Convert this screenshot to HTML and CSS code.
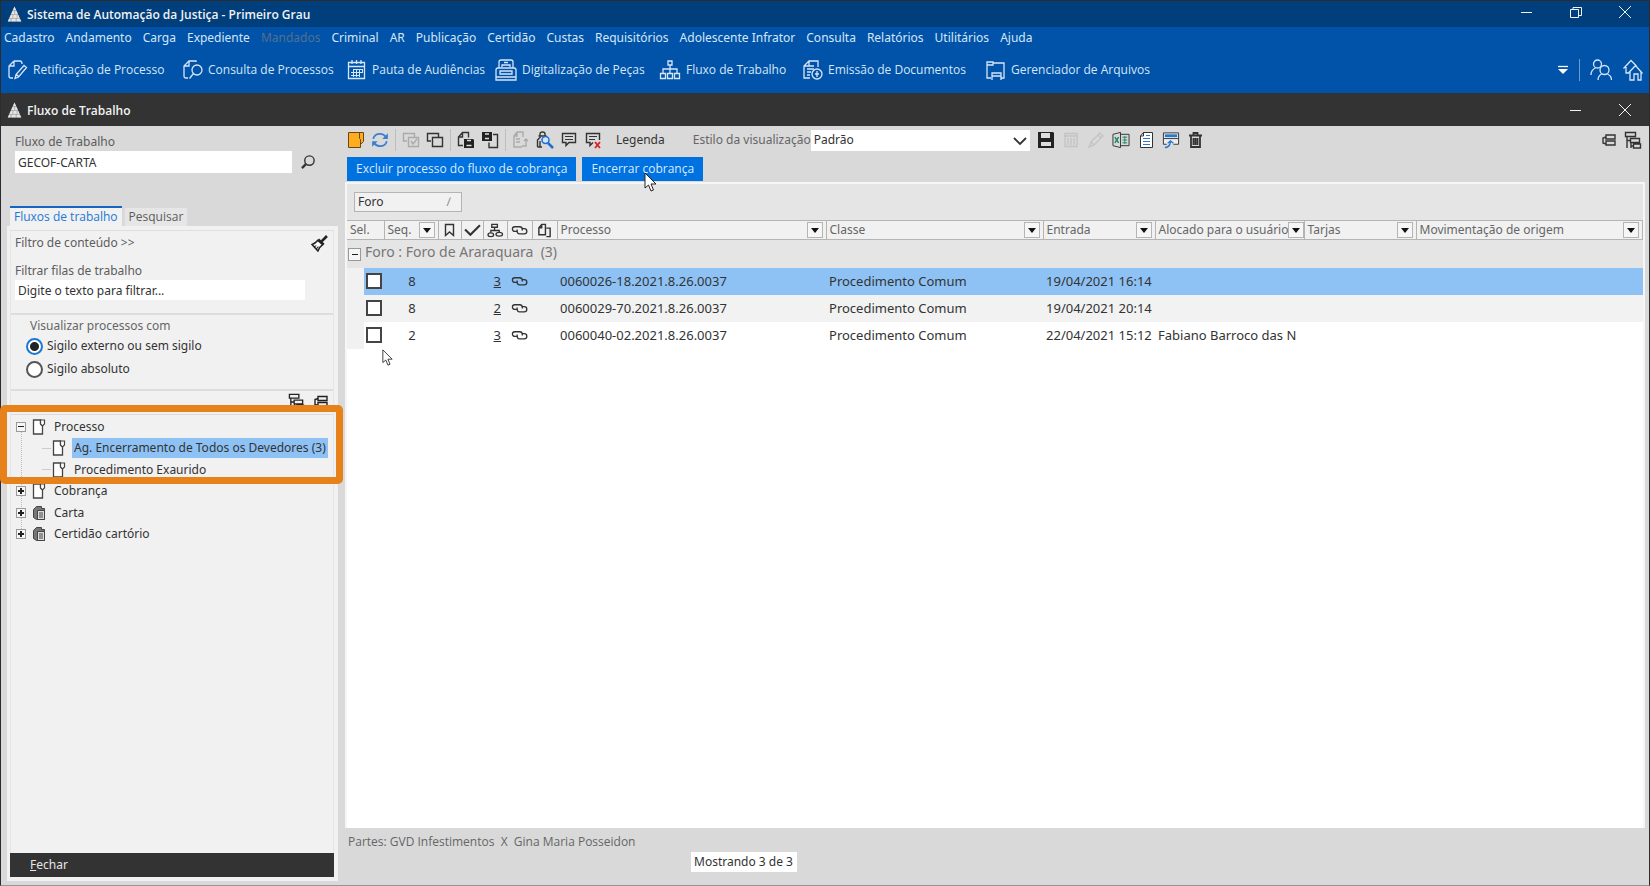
FILE: index.html
```html
<!DOCTYPE html>
<html lang="pt-BR">
<head>
<meta charset="utf-8">
<title>Sistema de Automação da Justiça - Primeiro Grau</title>
<link rel="stylesheet" href="styles.css">
</head>
<body>
<svg class="defs" aria-hidden="true">
  <symbol id="logo" viewBox="0 0 16 16"><path fill="#8a8a8a" d="M8 0 .8 16H15.200Z"/><path fill="#e4e4e4" d="M8 0 6.300 3.600 9.700 3.600ZM6 4.200 4.300 8.200H8V4.200ZM8.600 4.200V8.200h3.100L10 4.200ZM4 8.800 2.500 12.200H6V8.800ZM6.600 8.800v3.400h3.800V8.800ZM11 8.800v3.400h2.500L12 8.800ZM2.200 12.800 .8 16H4V12.800ZM4.600 12.800v3.200h4.800V12.800ZM10 12.800v3.200h5.200l-1.400-3.200Z"/></symbol>
  <symbol id="min" viewBox="0 0 14 14"><path d="M1 7.500H12"/></symbol>
  <symbol id="restore" viewBox="0 0 14 14"><path d="M1.500 4.500h8v8h-8ZM4 4V2.500h8.500v8H10"/></symbol>
  <symbol id="close" viewBox="0 0 14 14"><path d="M1 1 13 13M13 1 1 13"/></symbol>
  <symbol id="edit" viewBox="0 0 20 20"><path d="M6 1h6q2 0 2 3M6 1 1 6v10q0 2 2 2h2M6 1v5H1M7 18.500l1-4 8-9 2.500 2-8 9.500ZM8 14l2.500 2.500"/></symbol>
  <symbol id="lookup" viewBox="0 0 20 20"><path d="M5 18H3q-2 0-2-2V6l5-5h7v1M6 1v5H1"/><circle cx="14" cy="10" r="5"/><path d="m10.500 13.500-4 5"/></symbol>
  <symbol id="calendar" viewBox="0 0 20 20"><path d="M1.500 2.500h16v16h-16ZM1.500 6.500h16M5 0v4M9.500 0v4M14 0v4"/><path stroke-width="1" d="M7 9.500h9M4 12.500h12M4 15.500h9M6.500 9v8M9.500 9v8M12.500 9v8M15.500 9v4"/></symbol>
  <symbol id="scanner" viewBox="0 0 22 22"><path d="M4 9V3q0-2 2-2h10q2 0 2 2v6M7 8V6h8v2M1 11q0-2 2-2h16q2 0 2 2v10H1ZM5 12h12v3H5ZM1 18h20M9 3.500h4"/></symbol>
  <symbol id="flow" viewBox="0 0 22 20"><path d="M9 1h4v4H9ZM11 5v8M4 13V9h14v4M1.500 13.500h5v5h-5ZM8.500 13.500h5v5h-5ZM15.500 13.500h5v5h-5Z"/></symbol>
  <symbol id="emit" viewBox="0 0 20 20"><path d="M7 18H1V6l5-5h9v6M6 1v5H1M6 6h5M4 9h7M4 12h4M4 15h3"/><circle cx="14" cy="14" r="5"/><path d="M14 11v6M12 14h4"/></symbol>
  <symbol id="files" viewBox="0 0 20 20"><path d="M5 18H1V2h6v3H1M7 3h11v15h-3M6 20v-7h9v7M6 16h9"/></symbol>
  <symbol id="more" viewBox="0 0 12 12"><path d="M1 2.500h10"/><path fill="currentColor" stroke="none" d="M1 5h10l-5 5Z"/></symbol>
  <symbol id="users" viewBox="0 0 22 22"><circle cx="7.500" cy="5" r="4"/><circle cx="14.500" cy="11" r="4.500"/><path d="M1 16q0-5 4.500-7M8 21q0-4 3.500-6M17.500 15q4 2 4 6"/></symbol>
  <symbol id="homes" viewBox="0 0 20 22"><path d="M.5 9.500 8 1.500l5.500 5.500M3 8v6h2M5 14.500l7.500-8 7 8M7 13v8h4v-6h4v6h3v-8"/></symbol>
  <symbol id="search" viewBox="0 0 16 16"><circle cx="9" cy="6.500" r="5" stroke-width="1.500"/><path stroke-width="2.500" d="M5.500 10 1 14.500"/></symbol>
  <symbol id="brush" viewBox="0 0 16 16"><path stroke-width="2.500" d="m15 1-5 5"/><path stroke-width="2" d="m7 4 5 5"/><path fill="#fff" stroke-width="1.500" d="M6.500 5Q4 8 1 9l5.500 6Q8 11 11 9Z"/><path d="m3 11 2-1M5 13l2-2"/></symbol>
  <symbol id="tree" viewBox="0 0 18 18"><path stroke-width="1.400" d="M1.500 1.500h10v4h-10ZM6.500 7.500h9v4h-9ZM9.500 13h7v4h-7ZM3 6v11M3 9.500h3M7 12v5M7 15h3"/></symbol>
  <symbol id="stack" viewBox="0 0 14 14"><path stroke-width="1.400" d="M4 2h9v4H4ZM4 8h9v4H4ZM4 4 1 5v5l3 1"/></symbol>
  <symbol id="folder" viewBox="0 0 18 18"><path fill="#ffad1c" stroke="#684719" d="M1.500 1.500h12v15h-12Z"/><path fill="#ffad1c" stroke="#684719" d="M12.500 1.500h4v9l-3 3v-5l-1-1Z"/></symbol>
  <symbol id="refresh" viewBox="0 0 16 16"><path stroke="#3a80cf" stroke-width="1.600" d="M2 7q1-4.500 6-4.500 3 0 5 2.500M14 9q-1 4.500-6 4.500-3 0-5-2.500"/><path fill="#3a80cf" stroke="none" d="M15 2v5h-5ZM1 14V9h5Z"/></symbol>
  <symbol id="copies" viewBox="0 0 18 18"><path stroke-width="1.400" d="M5 10H1.500V2.500h11V6"/><path stroke-width="1.400" d="M6.500 6.500h10v9h-10Z"/></symbol>
  <symbol id="copycheck" viewBox="0 0 18 18"><path stroke-width="1.400" d="M5 10H1.500V2.500h11V6M6.500 6.500h10v9h-10ZM9 10l2 3 4-5"/></symbol>
  <symbol id="docsave" viewBox="0 0 18 18"><path stroke-width="1.400" d="M6 14.500H1.500V6l4-4.500h6v5M5.500 1.500V6h-4"/><path fill="#222" stroke="none" d="M7 8h9l1 1v8H7Z"/><path stroke="#ddd" stroke-width="1.500" d="M10 9.500h4M9.500 14.500h5"/></symbol>
  <symbol id="savedoc" viewBox="0 0 18 18"><path fill="#222" stroke="none" d="M1 1h10v9H1Z"/><path stroke="#ddd" stroke-width="1.500" d="M4 3h4M4 7.500h4"/><path stroke-width="1.400" d="M12 3.500h4.500v13H8v-5"/></symbol>
  <symbol id="docarrow" viewBox="0 0 16 18"><path stroke-width="1.400" d="M4 1h6v5M4 1 1 5v11h8M4 1v4H1M3 8h4M3 11h4M13 8v7h-4M11 10l2-2 2 2"/></symbol>
  <symbol id="person" viewBox="0 0 18 18"><path stroke-width="1.400" d="M4 5V3q0-2 2.500-2T9 3v2M2.500 5h8M1.500 16V9l3-3M1.500 16H6M4 16V10"/><circle cx="9.500" cy="9" r="3.500" stroke="#1d6fd0" stroke-width="1.500" fill="#cfe6ff"/><path stroke="#1d6fd0" stroke-width="2.500" d="m12 12 5 5"/></symbol>
  <symbol id="chat" viewBox="0 0 18 18"><path stroke-width="1.400" d="M2.500 2.500h13v9H9l-3 3v-3H2.500Z"/><path d="M5 5.500h8M5 8.500h8"/></symbol>
  <symbol id="chatx" viewBox="0 0 18 18"><path stroke-width="1.400" d="M9 11.500 6 14.500v-3H2.500v-9h13V9"/><path d="M5 5.500h8M5 8.500h6"/><path stroke="#d82020" stroke-width="1.800" d="m11 11 5 6M16 11l-5 6"/></symbol>
  <symbol id="save" viewBox="0 0 18 18"><path fill="#222" stroke="none" d="M1 1h15l1 1v15H1Z"/><path fill="#ddd" stroke="none" d="M4 2h9v5H4ZM4 11h10v4H4Z"/></symbol>
  <symbol id="trash" viewBox="0 0 18 18"><path stroke-width="1.800" d="M2 4.500h13M6.500 4V2h4v2M4 5v11h9V5M6.500 7v7M8.500 7v7M10.500 7v7"/></symbol>
  <symbol id="calc" viewBox="0 0 16 18"><path stroke-width="1.400" d="M2 2.500h12v13H2ZM1 5h14M5 7v7M8 7v7M11 7v7"/></symbol>
  <symbol id="pencil" viewBox="0 0 18 18"><path stroke-width="1.400" d="m2 16 2-5 9-9 3 3-9 9ZM4 11l3 3M11 4l3 3"/></symbol>
  <symbol id="excel" viewBox="0 0 19 18"><path d="M1 3 9 1v16l-8-2ZM9 3h9v12H9"/><path stroke="#1d8a5f" stroke-width="1.600" d="m3 6 4 6M7 6l-4 6"/><path stroke="#1d8a5f" d="M11 6h5M11 9h5M11 12h5M13.500 5v8"/></symbol>
  <symbol id="doc" viewBox="0 0 16 18"><path fill="#fff" d="M5.500 1.500h9v15h-12V5ZM5.500 1.500V5h-3"/><path stroke="#2878d0" d="M5 7.500h7M5 10.500h7M5 13.500h7M8 4.500h4"/></symbol>
  <symbol id="window" viewBox="0 0 19 18"><path fill="#eee" d="M5 13.500H1.500v-12h16v12H12M2 7.500h15"/><path fill="#2878d0" stroke="none" d="M3 3h13v3H3Z"/><path stroke="#2878d0" stroke-width="1.500" d="M3 17q5 0 6-6M6 12.500l3-2.500 3 2.500"/></symbol>
  <symbol id="bookmark" viewBox="0 0 16 15"><path stroke-width="1.400" d="M4 1.500h8v11L8 9l-4 3.500Z"/></symbol>
  <symbol id="check" viewBox="0 0 16 14"><path stroke-width="2" d="m1 6 5 5 9-9"/></symbol>
  <symbol id="nodes" viewBox="0 0 18 16"><path stroke-width="1.400" d="M5 1.500h6v3H5ZM8 5v3M4 10V8h9v2"/><ellipse stroke-width="1.400" cx="4" cy="12.500" rx="3" ry="2"/><ellipse stroke-width="1.400" cx="13" cy="12" rx="3.500" ry="2"/></symbol>
  <symbol id="link" viewBox="0 0 18 12"><path stroke-width="1.400" d="M7 7H4a2.500 2.500 0 0 1 0-5H9q3 0 3 3v1M11 4h3a2.700 2.700 0 0 1 0 5.500H9Q6.500 9.500 6.500 6.500V5"/></symbol>
  <symbol id="pages" viewBox="0 0 16 16"><path stroke-width="1.500" d="M5 1.500h4v11H2V5ZM5 1.500V5H2M10 5.500h4v9h-4"/></symbol>
  <symbol id="page" viewBox="0 0 13 16"><path fill="#fff" stroke-width="1.300" d="M1 1h7v4l2 2v8H1Z"/><path fill="#fff" stroke-width="1.200" d="M8 1h4v4l-2 2-2-2Z"/></symbol>
  <symbol id="pagestack" viewBox="0 0 14 16"><path fill="#777" d="M1.500 4.500 4.500 1.500h5v2h3v11h-8l-3-2Z"/><path fill="#ddd" d="M5.500 5.500h7v9h-7Z"/><path d="M7 8h4M7 10h4M7 12h4"/></symbol>
  <symbol id="chevron" viewBox="0 0 14 10"><path stroke-width="1.800" d="m1 2 6 6 6-6"/></symbol>
  <symbol id="pointer" viewBox="0 0 13 20"><path fill="#fff" stroke="#222" d="M1 1v15l3.500-3 2.500 6 2.500-1L7 12h5Z"/></symbol>
</svg>

<div class="app">
  <header class="titlebar">
    <svg class="logo"><use href="#logo"/></svg>
    <h1>Sistema de Automação da Justiça - Primeiro Grau</h1>
    <div class="wincontrols">
      <button aria-label="Minimizar"><svg><use href="#min"/></svg></button>
      <button aria-label="Restaurar"><svg><use href="#restore"/></svg></button>
      <button aria-label="Fechar janela"><svg><use href="#close"/></svg></button>
    </div>
  </header>
  <nav class="menu">
    <a href="#">Cadastro</a><a href="#">Andamento</a><a href="#">Carga</a><a href="#">Expediente</a><a href="#" class="off">Mandados</a><a href="#">Criminal</a><a href="#">AR</a><a href="#">Publicação</a><a href="#">Certidão</a><a href="#">Custas</a><a href="#">Requisitórios</a><a href="#">Adolescente Infrator</a><a href="#">Consulta</a><a href="#">Relatórios</a><a href="#">Utilitários</a><a href="#">Ajuda</a>
  </nav>
  <div class="shortcuts">
    <div class="shortcut-list">
      <button><svg><use href="#edit"/></svg>Retificação de Processo</button>
      <button><svg><use href="#lookup"/></svg>Consulta de Processos</button>
      <button><svg><use href="#calendar"/></svg>Pauta de Audiências</button>
      <button><svg class="large"><use href="#scanner"/></svg>Digitalização de Peças</button>
      <button><svg class="large"><use href="#flow"/></svg>Fluxo de Trabalho</button>
      <button><svg><use href="#emit"/></svg>Emissão de Documentos</button>
      <button><svg><use href="#files"/></svg>Gerenciador de Arquivos</button>
    </div>
    <div class="session">
      <button aria-label="Mais opções"><svg class="small"><use href="#more"/></svg></button>
      <i class="bar"></i>
      <button aria-label="Usuários"><svg class="large"><use href="#users"/></svg></button>
      <button aria-label="Início"><svg class="large"><use href="#homes"/></svg></button>
    </div>
  </div>

  <div class="subtitle">
    <svg class="logo"><use href="#logo"/></svg>
    <h2>Fluxo de Trabalho</h2>
    <div class="wincontrols">
      <button aria-label="Minimizar fluxo"><svg><use href="#min"/></svg></button>
      <button aria-label="Fechar fluxo"><svg><use href="#close"/></svg></button>
    </div>
  </div>

  <div class="body">
    <aside class="side">
      <div class="picker">
        <label for="fluxo">Fluxo de Trabalho</label>
        <div class="picker-row">
          <input id="fluxo" type="text" value="GECOF-CARTA">
          <button aria-label="Buscar"><svg><use href="#search"/></svg></button>
        </div>
      </div>
      <div class="tabs">
        <button class="tab active">Fluxos de trabalho</button>
        <button class="tab">Pesquisar</button>
      </div>
      <div class="panel">
        <div class="inner">
          <div class="filters">
            <div class="filter-head"><a href="#">Filtro de conteúdo &gt;&gt;</a><button aria-label="Limpar filtro"><svg><use href="#brush"/></svg></button></div>
            <label for="filas">Filtrar filas de trabalho</label>
            <input id="filas" type="text" value="Digite o texto para filtrar...">
          </div>
          <fieldset class="secrecy">
            <legend>Visualizar processos com</legend>
            <label><input type="radio" name="sigilo" checked>Sigilo externo ou sem sigilo</label>
            <label><input type="radio" name="sigilo">Sigilo absoluto</label>
          </fieldset>
          <div class="treetools">
            <button aria-label="Expandir filas"><svg class="wide"><use href="#tree"/></svg></button>
            <button aria-label="Recolher filas"><svg><use href="#stack"/></svg></button>
          </div>
          <ul class="tree">
            <li><button class="toggle" aria-label="Recolher Processo"><i></i></button><svg><use href="#page"/></svg><span>Processo</span></li>
            <li class="child"><svg><use href="#page"/></svg><span class="picked">Ag. Encerramento de Todos os Devedores (3)</span></li>
            <li class="child"><svg><use href="#page"/></svg><span>Procedimento Exaurido</span></li>
            <li><button class="toggle plus" aria-label="Expandir Cobrança"><i></i></button><svg><use href="#page"/></svg><span>Cobrança</span></li>
            <li><button class="toggle plus" aria-label="Expandir Carta"><i></i></button><svg><use href="#pagestack"/></svg><span>Carta</span></li>
            <li><button class="toggle plus" aria-label="Expandir Certidão"><i></i></button><svg><use href="#pagestack"/></svg><span>Certidão cartório</span></li>
          </ul>
        </div>
        <button class="closebtn"><u>F</u>echar</button>
      </div>
      <div class="highlight"></div>
    </aside>

    <main class="main">
      <div class="tools">
        <div class="group g1">
          <button aria-label="Abrir"><svg><use href="#folder"/></svg></button>
          <button aria-label="Atualizar"><svg><use href="#refresh"/></svg></button>
        </div>
        <div class="group">
          <button aria-label="Marcar todos" class="dim"><svg><use href="#copycheck"/></svg></button>
          <button aria-label="Desmarcar"><svg><use href="#copies"/></svg></button>
        </div>
        <div class="group">
          <button aria-label="Gravar documento"><svg><use href="#docsave"/></svg></button>
          <button aria-label="Gravar cópia"><svg><use href="#savedoc"/></svg></button>
        </div>
        <div class="group">
          <button aria-label="Mover" class="dim"><svg><use href="#docarrow"/></svg></button>
          <button aria-label="Consultar parte"><svg><use href="#person"/></svg></button>
          <button aria-label="Observação"><svg><use href="#chat"/></svg></button>
          <button aria-label="Excluir observação"><svg><use href="#chatx"/></svg></button>
        </div>
        <button class="legend">Legenda</button>
        <label for="estilo">Estilo da visualização</label>
        <div class="select"><select id="estilo"><option>Padrão</option></select><svg><use href="#chevron"/></svg></div>
        <div class="group g2">
          <button aria-label="Salvar"><svg><use href="#save"/></svg></button>
          <button aria-label="Descartar" class="faint"><svg><use href="#calc"/></svg></button>
          <button aria-label="Editar" class="faint"><svg><use href="#pencil"/></svg></button>
          <button aria-label="Excel"><svg><use href="#excel"/></svg></button>
          <button aria-label="Relatório"><svg><use href="#doc"/></svg></button>
          <button aria-label="Restaurar visualização"><svg><use href="#window"/></svg></button>
          <button aria-label="Excluir"><svg><use href="#trash"/></svg></button>
        </div>
        <div class="group g3">
          <button aria-label="Recolher"><svg class="small"><use href="#stack"/></svg></button>
          <button aria-label="Expandir"><svg><use href="#tree"/></svg></button>
        </div>
      </div>
      <div class="actions">
        <button>Excluir processo do fluxo de cobrança</button>
        <button>Encerrar cobrança</button>
        <svg class="cursor over"><use href="#pointer"/></svg>
      </div>
      <div class="grid">
        <div class="groupby"><button>Foro<span>∕</span></button></div>
        <table>
          <colgroup><col class="c-gut"><col class="c-box"><col class="c-seq"><col class="c-mark"><col class="c-tick"><col class="c-node"><col class="c-link"><col class="c-link"><col class="c-proc"><col class="c-class"><col class="c-date"><col class="c-user"><col class="c-date"><col></colgroup>
          <thead>
            <tr>
              <th colspan="2">Sel.</th>
              <th><div>Seq.<button aria-label="Filtrar Seq."></button></div></th>
              <th class="ico"><svg><use href="#bookmark"/></svg></th>
              <th class="ico"><svg><use href="#check"/></svg></th>
              <th class="ico"><svg><use href="#nodes"/></svg></th>
              <th class="ico"><svg><use href="#link"/></svg></th>
              <th class="ico"><svg><use href="#pages"/></svg></th>
              <th><div>Processo<button aria-label="Filtrar Processo"></button></div></th>
              <th><div>Classe<button aria-label="Filtrar Classe"></button></div></th>
              <th><div>Entrada<button aria-label="Filtrar Entrada"></button></div></th>
              <th><div>Alocado para o usuário<button aria-label="Filtrar usuário"></button></div></th>
              <th><div>Tarjas<button aria-label="Filtrar Tarjas"></button></div></th>
              <th><div>Movimentação de origem<button aria-label="Filtrar Movimentação"></button></div></th>
            </tr>
          </thead>
          <tbody>
            <tr class="grouprow"><td><button class="toggle" aria-label="Recolher grupo"><i></i></button></td><td colspan="13">Foro : Foro de Araraquara&nbsp; (3)</td></tr>
            <tr class="sel"><td></td><td class="box"><input type="checkbox" aria-label="Selecionar 0060026"></td><td class="num">8</td><td></td><td></td><td class="qty"><a href="#">3</a></td><td class="ico"><svg><use href="#link"/></svg></td><td></td><td>0060026-18.2021.8.26.0037</td><td>Procedimento Comum</td><td>19/04/2021 16:14</td><td></td><td></td><td></td></tr>
            <tr class="alt"><td></td><td class="box"><input type="checkbox" aria-label="Selecionar 0060029"></td><td class="num">8</td><td></td><td></td><td class="qty"><a href="#">2</a></td><td class="ico"><svg><use href="#link"/></svg></td><td></td><td>0060029-70.2021.8.26.0037</td><td>Procedimento Comum</td><td>19/04/2021 20:14</td><td></td><td></td><td></td></tr>
            <tr><td></td><td class="box"><input type="checkbox" aria-label="Selecionar 0060040"></td><td class="num">2</td><td></td><td></td><td class="qty"><a href="#">3</a></td><td class="ico"><svg><use href="#link"/></svg></td><td></td><td>0060040-02.2021.8.26.0037</td><td>Procedimento Comum</td><td>22/04/2021 15:12</td><td>Fabiano Barroco das N</td><td></td><td></td></tr>
          </tbody>
        </table>
        <svg class="cursor below"><use href="#pointer"/></svg>
      </div>
      <footer class="status">
        <p>Partes: GVD Infestimentos&nbsp; X&nbsp; Gina Maria Posseidon</p>
        <output>Mostrando 3 de 3</output>
      </footer>
    </main>
  </div>
</div>
</body>
</html>
```

FILE: styles.css
```css
* { box-sizing: border-box; }
body { margin: 0; font: 12px/16px "Noto Sans", "Open Sans", sans-serif; color: #333; }
button, input, select { font: inherit; color: inherit; margin: 0; padding: 0; border: 0; background: none; border-radius: 0; }
button { display: flex; align-items: center; }
a { color: inherit; text-decoration: none; }
h1, h2, p, ul { margin: 0; padding: 0; }
svg { width: 18px; height: 18px; flex: none; fill: none; stroke: currentColor; display: block; }
.defs { position: absolute; width: 0; height: 0; }

.app { display: flex; flex-direction: column; min-height: 100vh; background: #d9d9d9; border: 1px solid #2c2c2c; border-bottom-color: #98929a; }

.titlebar, .subtitle { display: flex; align-items: center; color: #f2f2f2; padding: 0 17px 0 6px; }
.titlebar { height: 26px; background: #003e7c; }
.subtitle { height: 33px; background: #333; }
.titlebar h1, .subtitle h2, .shortcuts, .tabs, .actions, .status p { font-family: "Open Sans", "Noto Sans", sans-serif; }
.titlebar h1, .subtitle h2 { padding-top: 2px; font-size: 12px; line-height: 16px; font-weight: 600; }
.logo { width: 15px; height: 16px; margin-right: 5px; stroke: none; }
.wincontrols { display: flex; gap: 35px; margin-left: auto; }
.titlebar .wincontrols { padding-bottom: 4px; }
.wincontrols svg { width: 14px; height: 14px; }

.menu { display: flex; gap: 11px; padding: 3px 3px 0; height: 24px; background: #0053a8; color: #d5e6f8; white-space: nowrap; }
.menu .off { color: #52708f; }
.shortcuts { display: flex; align-items: center; height: 42px; padding: 0 5px 4px 7px; background: #0053a8; color: #d5e6f8; }
.shortcut-list { display: grid; grid-template-columns: 175px 164px 148px 164px 144px 183px auto; white-space: nowrap; }
.shortcut-list button { gap: 5px; }
.shortcuts svg { width: 20px; height: 20px; stroke-width: 1.3px; }
.shortcuts .large { width: 22px; height: 22px; }
.shortcuts .small { width: 12px; height: 12px; color: #fff; }
.session { display: flex; align-items: center; gap: 10px; margin-left: auto; }
.session .bar { width: 1px; height: 22px; background: #6c9bcc; }

.body { display: flex; flex: 1; }
.side { position: relative; display: flex; flex-direction: column; width: 337px; padding: 8px 0 4px 6px; flex: none; }
.picker { padding-left: 8px; color: #5c5c5c; height: 72px; }
.picker label { display: block; height: 17px; }
.picker-row { display: flex; align-items: center; gap: 9px; }
.picker-row input { width: 277px; height: 22px; padding: 0 3px; background: #fff; color: #333; }
.picker-row svg { width: 15px; height: 16px; }
.picker-row button { color: #333; }
.tabs { display: flex; align-items: flex-end; gap: 3px; height: 20px; padding-left: 3px; color: #5c5c5c; }
.tab { height: 18px; padding: 0 4px; background: #e6e6e6; }
.tab.active { height: 20px; background: #f1f1f1; color: #1b78d4; border-top: 2px solid #1367c0; }
.panel { display: flex; flex-direction: column; flex: 1; padding: 4px 4px 4px 3px; background: #f1f1f1; }
.inner { flex: 1; border-top: 1px solid #dedede; border-left: 1px solid #e6e6e6; border-right: 1px solid #e6e6e6; }
.filters { height: 84px; padding: 4px 5px 0 4px; border-bottom: 2px solid #dcdcdc; color: #5c5c5c; }
.filter-head { display: flex; align-items: flex-start; justify-content: space-between; height: 28px; }
.filter-head svg, .treetools svg { color: #222; }
.filter-head a { line-height: 16px; }
.filter-head svg { width: 17px; height: 17px; }
.filters label { display: block; height: 16px; margin-bottom: 1px; }
.filters input { display: block; width: 290px; height: 20px; padding: 0 3px; background: #fff; color: #333; }
.secrecy { margin: 0; padding: 19px 0 0 15px; height: 76px; border: 0; border-bottom: 2px solid #dcdcdc; }
.secrecy legend { float: left; padding: 0; margin-top: -16px; margin-left: 4px; color: #666; }
.secrecy label { display: flex; align-items: center; gap: 4px; height: 24px; clear: both; margin-top: -1px; }
.secrecy input { appearance: none; width: 17px; height: 17px; border: 2px solid #555; border-radius: 50%; background: #fff; }
.secrecy input:checked { border-color: #1b78d4; background: radial-gradient(circle, #222 0 4px, #fff 5px); }
.treetools { display: flex; align-items: flex-start; justify-content: flex-end; gap: 9px; padding: 2px 5px 0; height: 24px; border-bottom: 1px solid #dcdcdc; }
.treetools svg { width: 14px; height: 17px; }
.treetools .wide { width: 17px; }
.tree { display: grid; grid-auto-rows: 1fr; height: 129px; margin-top: 1px; padding-left: 5px; list-style: none; white-space: nowrap; background: repeating-linear-gradient(#bbb 0 1px, transparent 1px 2px) 10px 12px / 1px 107px no-repeat; }
.tree li { display: flex; align-items: center; gap: 6px; }
.tree li svg { width: 14px; height: 16px; color: #444; }
.tree .child { padding-left: 36px; background: linear-gradient(#ccc, #ccc) 26px 50% / 9px 1px no-repeat; }
.tree span { padding: 2px; }
.tree .picked { background: #8ec2f5; }
.toggle { justify-content: center; width: 10px; height: 10px; border: 1px solid #999; background: #f6f6f6; }
.toggle i { width: 6px; height: 6px; background: linear-gradient(#222, #222) center / 6px 1px no-repeat; }
.toggle.plus i { background: linear-gradient(#222, #222) center / 6px 2px no-repeat, linear-gradient(#222, #222) center / 2px 6px no-repeat; }
.closebtn { height: 24px; padding-left: 20px; background: #333; color: #e6e6e6; }
.highlight { position: absolute; left: -1px; top: 279px; width: 343px; height: 79px; border: 7px solid #e7821b; border-radius: 5px; z-index: 2; }

.main { display: flex; flex-direction: column; flex: 1; min-width: 0; padding-left: 7px; }
.tools { display: flex; align-items: center; height: 28px; padding: 0 7px 0 2px; color: #333; white-space: nowrap; }
.tools .group { display: flex; align-items: center; gap: 6px; height: 22px; padding: 0 6px; border-left: 1px solid #bdbdbd; }
.tools svg { width: 18px; height: 18px; }
.tools .g1, .tools .g2, .tools .g3 { border: 0; }
.tools .g1 { padding-left: 0; }
.tools .dim { color: #aaa; }
.tools .faint { color: #c4c4c4; }
.legend { margin: 0 28px 0 8px; font-size: 12px; }
.tools label { color: #666; }
.select { position: relative; width: 219px; height: 21px; background: #fff; }
.select select { appearance: none; width: 100%; height: 100%; padding: 0 3px; }
.select svg { position: absolute; right: 3px; top: 6px; width: 14px; height: 10px; pointer-events: none; }
.tools .g2 { gap: 7px; padding-left: 7px; }
.tools .g3 { gap: 8px; margin-left: auto; padding: 0; }
.tools .small { width: 14px; height: 14px; }
.actions { position: relative; display: flex; gap: 6px; padding: 3px 0 0 2px; height: 28px; }
.actions button { height: 24px; padding: 0 9px; background: #0071e0; color: #d8ebff; }
.cursor { position: absolute; z-index: 3; }
.cursor.over { left: 299px; top: 18px; width: 13px; height: 20px; }

.grid { position: relative; flex: 1; margin-right: 4px; border-top: 2px solid #f6f6f6; border-left: 2px solid #f6f6f6; border-right: 2px solid #f6f6f6; background: #fff; }
.groupby { height: 36px; padding: 8px 7px; background: #e5e5e5; }
.groupby button { justify-content: space-between; width: 108px; height: 20px; padding: 0 10px 0 3px; border: 1px solid #b4b4b4; background: #f1f1f1; }
.groupby span { color: #888; }
table { width: 100%; table-layout: fixed; border-collapse: collapse; font-size: 13px; }
th { height: 19px; padding: 0 0 0 3px; border: 1px solid #b4b4b4; border-width: 1px 1px 1px 0; background: #f1f1f1; font-size: 12px; font-weight: 400; text-align: left; color: #666; line-height: 16px; white-space: nowrap; overflow: hidden; }
th div { display: flex; justify-content: space-between; align-items: center; padding-right: 3px; }
th button { justify-content: center; width: 16px; height: 16px; flex: none; border: 1px solid #b4b4b4; background: #f6f6f6; }
th button::after { content: ""; border: 4px solid transparent; border-top: 5px solid #111; border-bottom: 0; }
th.ico { padding: 0; }
.ico svg { width: 17px; height: 15px; margin: 0 auto; color: #333; }
td { height: 27px; padding: 0 0 0 3px; white-space: nowrap; overflow: hidden; }
.c-gut { width: 17px; } .c-box { width: 20px; } .c-seq { width: 54px; } .c-mark { width: 23px; } .c-tick { width: 22px; } .c-node { width: 24px; } .c-link { width: 25px; } .c-proc { width: 269px; } .c-class { width: 217px; } .c-date { width: 112px; } .c-user { width: 149px; }
tbody td:first-child { background: #f1f1f1; padding: 0; }
.grouprow td, tbody .grouprow td:first-child { height: 28px; background: #e5e5e5; color: #777; }
.grouprow td { padding: 0 0 4px 1px; font-size: 14px; }
.grouprow .toggle { width: 13px; height: 13px; margin: 2px 0 0 1px; }
.sel td { background: #8ec2f5; }
.alt td { background: #f2f2f2; }
td.box { padding: 0 0 0 2px; }
td.box input { appearance: none; display: block; width: 16px; height: 16px; border: 2px solid #444; background: #fff; }
td.num { text-align: center; padding: 0 0 0 2px; }
td.qty { text-align: right; padding-right: 6px; }
td.qty a { text-decoration: underline; }
td.ico { padding: 0; }
.cursor.below { left: 35px; top: 165px; width: 11px; height: 17px; }

.status { height: 57px; padding: 6px 0 0 3px; color: #666; }
.status output { display: block; width: fit-content; margin: 2px 0 0 343px; padding: 2px 4px 2px 3px; background: #fff; color: #333; }
```
